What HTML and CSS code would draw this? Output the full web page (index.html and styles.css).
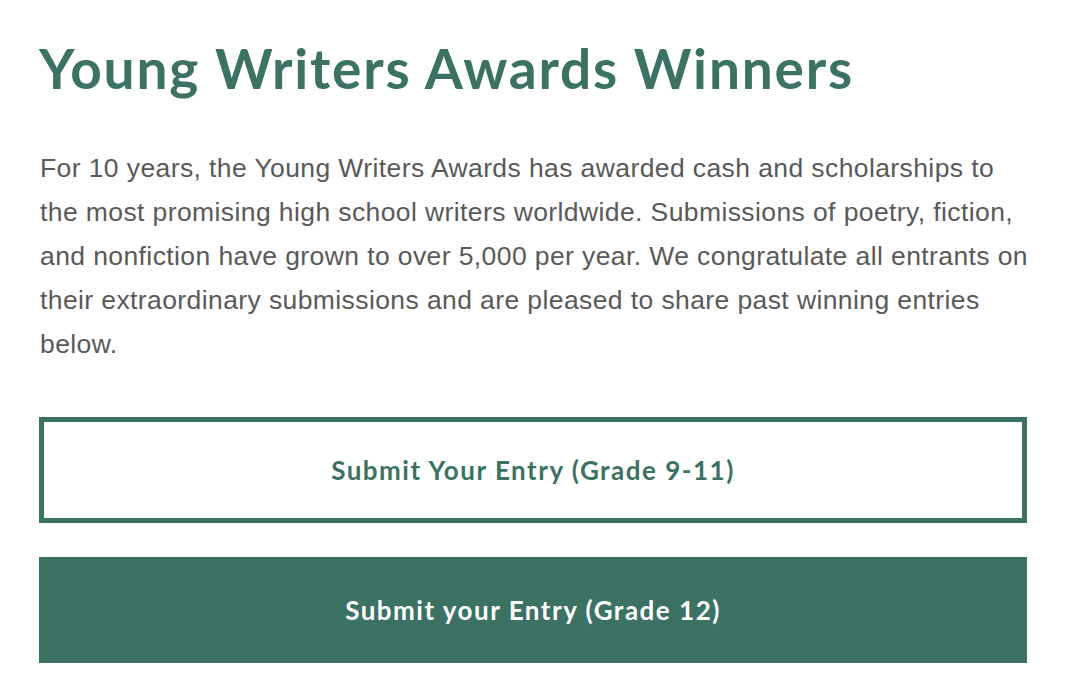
FILE: index.html
```html
<!DOCTYPE html>
<html lang="en">
<head>
<meta charset="utf-8">
<title>Young Writers Awards Winners</title>
<link rel="stylesheet" href="styles.css">
</head>
<body>
<main class="page">
  <h1 class="title">Young Writers Awards Winners</h1>
  <p class="intro">For 10 years, the Young Writers Awards has awarded cash and scholarships to the most promising high school writers worldwide. Submissions of poetry, fiction, and nonfiction have grown to over 5,000 per year. We congratulate all entrants on their extraordinary submissions and are pleased to share past winning entries below.</p>
  <div class="actions">
    <a class="btn btn-outline" href="#">Submit Your Entry (Grade 9-11)</a>
    <a class="btn btn-solid" href="#">Submit your Entry (Grade 12)</a>
  </div>
</main>
</body>
</html>
```
FILE: styles.css
```css
html, body {
  margin: 0;
  padding: 0;
  background: #ffffff;
}
.page {
  width: 988px;
  padding: 28px 0 0 39px;
}
.title {
  margin: 0;
  font-family: Lato, "Noto Sans", sans-serif;
  font-weight: 700;
  font-size: 55px;
  line-height: 80px;
  color: #3b7263;
  letter-spacing: 1.8px;
}
.intro {
  width: 994px;
  margin: 38px 0 0 0;
  font-family: "Liberation Sans", Arial, sans-serif;
  font-size: 26.5px;
  line-height: 44px;
  letter-spacing: 0.4px;
  color: #595959;
  padding-left: 1px;
}
.actions {
  margin-top: 51px;
  display: flex;
  flex-direction: column;
  gap: 34px;
}
.btn {
  box-sizing: border-box;
  height: 106px;
  display: flex;
  align-items: center;
  justify-content: center;
  font-family: Lato, "Noto Sans", sans-serif;
  font-weight: 700;
  font-size: 26px;
  letter-spacing: 1.5px;
  text-decoration: none;
}
.btn-outline {
  border: 5px solid #3b7263;
  color: #3b7263;
  background: #ffffff;
}
.btn-solid {
  background: #3b7263;
  color: #ffffff;
}
```
